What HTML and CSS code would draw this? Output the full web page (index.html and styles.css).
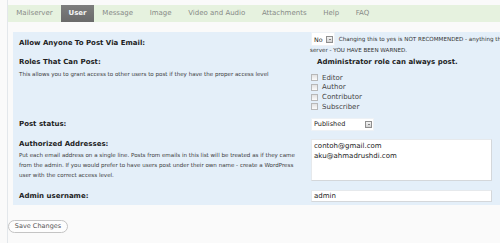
FILE: index.html
```html
<!DOCTYPE html>
<html>
<head>
<meta charset="utf-8">
<link rel="stylesheet" href="styles.css">
</head>
<body>
<div class="wrap">
  <ul class="tabs">
    <li>Mailserver</li>
    <li class="active">User</li>
    <li>Message</li>
    <li>Image</li>
    <li>Video and Audio</li>
    <li>Attachments</li>
    <li>Help</li>
    <li>FAQ</li>
  </ul>
  <div class="panel">
    <div class="row row-email">
      <div class="label l-email">Allow Anyone To Post Via Email:</div>
      <div class="field warn">
        <span class="select sel-no"><span class="sel-text">No</span><span class="sel-btn"></span></span> Changing this to yes is NOT RECOMMENDED - anything tha<br>server - YOU HAVE BEEN WARNED.
      </div>
    </div>
    <div class="row row-roles">
      <div>
        <div class="label l-roles">Roles That Can Post:</div>
        <div class="desc">This allows you to grant access to other users to post if they have the proper access level</div>
      </div>
      <div class="field">
        <div class="admin-note">Administrator role can always post.</div>
        <ul class="checks">
          <li><span class="cb"></span>Editor</li>
          <li><span class="cb"></span>Author</li>
          <li><span class="cb"></span>Contributor</li>
          <li><span class="cb"></span>Subscriber</li>
        </ul>
      </div>
    </div>
    <div class="row row-status">
      <div class="label l-status">Post status:</div>
      <div class="field">
        <span class="select sel-pub"><span class="sel-text">Published</span><span class="sel-btn"></span></span>
      </div>
    </div>
    <div class="row row-addr">
      <div>
        <div class="label l-addr">Authorized Addresses:</div>
        <div class="desc desc-addr">Put each email address on a single line. Posts from emails in this list will be treated as if they came from the admin. If you would prefer to have users post under their own name - create a WordPress user with the correct access level.</div>
      </div>
      <div class="field">
        <div class="textarea">contoh@gmail.com<br>aku@ahmadrushdi.com</div>
      </div>
    </div>
    <div class="row row-admin">
      <div class="label l-admin">Admin username:</div>
      <div class="field">
        <div class="input">admin</div>
      </div>
    </div>
  </div>
  <div class="actions">
    <span class="button">Save Changes</span>
  </div>
</div>
</body>
</html>
```

FILE: styles.css
```css
html, body {
  margin: 0;
  padding: 0;
  width: 500px;
  height: 243px;
  overflow: hidden;
  background: #fafafa;
  font-family: "DejaVu Sans", Verdana, sans-serif;
  color: #333;
}

.wrap {
  margin-left: 7px;
  padding-top: 5px;
  height: 238px;
  border-left: 1px solid #e3e7eb;
}

.tabs {
  list-style: none;
  margin: 0;
  padding: 0;
  display: flex;
  height: 17px;
  background: #e6f2df;
  white-space: nowrap;
  overflow: hidden;
}

.tabs li {
  padding: 0 8.3px;
  font-size: 7px;
  line-height: 17px;
  color: #878a87;
}

.tabs li.active {
  background: linear-gradient(#7d7d7d, #6a6a6a);
  color: #f4f4f4;
  font-weight: bold;
  padding: 0 7.5px;
}

.panel {
  margin: 10px 0 0 5px;
  padding: 1px 0 0 6px;
  width: 600px;
  height: 172px;
  background: #e4eff9;
}

.row {
  display: grid;
  grid-template-columns: 291px 300px;
  align-items: start;
}

.label {
  font-size: 7px;
  font-weight: bold;
  color: #1e1e1e;
  white-space: nowrap;
}

.desc {
  font-size: 5.55px;
  line-height: 10px;
  color: #3a3a3a;
}

.field {
  font-size: 7px;
  color: #333;
}

/* row 1 */
.row-email { height: 23px; }
.l-email { padding-top: 6px; line-height: 9px; }
.warn {
  padding-top: 1px;
  font-size: 5.6px;
  line-height: 11px;
  white-space: nowrap;
  color: #333;
}

.select {
  display: inline-flex;
  align-items: center;
  justify-content: space-between;
  box-sizing: border-box;
  background: #fff;
  border: 1px solid #eef2f6;
  vertical-align: middle;
  font-size: 6.3px;
  color: #222;
}
.sel-no {
  width: 24px;
  height: 14px;
  margin: -2px 2px -2px 1px;
  padding: 0 1px 0 2px;
}
.sel-pub {
  width: 63px;
  height: 13px;
  margin-left: 1px;
  padding: 0 1px 0 2px;
  font-size: 6.5px;
}
.sel-btn {
  position: relative;
  width: 7px;
  height: 7px;
  box-sizing: border-box;
  border: 1px solid #8f8f8f;
  background: linear-gradient(#f4f4f4, #d2d2d2);
}
.sel-btn::after {
  content: "";
  position: absolute;
  left: 1.5px;
  top: 2px;
  border-left: 1.5px solid transparent;
  border-right: 1.5px solid transparent;
  border-top: 1.5px solid #222;
}

/* row 2 */
.row-roles { height: 55.7px; }
.l-roles { line-height: 13px; }
.admin-note {
  font-size: 7px;
  font-weight: bold;
  line-height: 13px;
  padding-left: 7px;
  color: #1e1e1e;
  white-space: nowrap;
}
.checks {
  list-style: none;
  margin: 4px 0 0;
  padding: 0;
}
.checks li {
  display: flex;
  align-items: center;
  height: 9.67px;
  font-size: 7px;
  color: #444;
}
.cb {
  width: 5px;
  height: 5px;
  margin: 0 4px 0 1px;
  border: 1px solid #b8b8b8;
  background: linear-gradient(#e2e2e2, #fbfbfb);
  flex: none;
}

/* row 3 */
.row-status { padding-top: 6px; height: 13px; }
.l-status { line-height: 13px; }

/* row 4 */
.row-addr { margin-top: 8px; }
.l-addr { line-height: 11px; }
.desc-addr { width: 287px; }
.textarea {
  margin-left: 1px;
  width: 181px;
  height: 42px;
  box-sizing: border-box;
  background: #fff;
  border: 1px solid #e6e9ec;
  border-right-color: #d4d7da;
  border-bottom-color: #d4d7da;
  padding: 1px 2px;
  font-size: 7px;
  line-height: 10px;
  color: #222;
}

/* row 5 */
.row-admin { margin-top: 9px; }
.l-admin { line-height: 12px; }
.input {
  margin-left: 1px;
  width: 181px;
  height: 12px;
  box-sizing: border-box;
  background: #fff;
  border: 1px solid #e6e9ec;
  border-right-color: #d4d7da;
  border-bottom-color: #d4d7da;
  padding: 0 2px;
  font-size: 7px;
  line-height: 10px;
  color: #222;
}

.actions {
  display: flex;
  margin-top: 15px;
}
.button {
  display: block;
  box-sizing: border-box;
  width: 60px;
  height: 13px;
  border: 1px solid #c4c4c4;
  border-radius: 7px;
  background: #fdfdfd;
  font-size: 6.5px;
  line-height: 11px;
  text-align: center;
  color: #555;
}
```
